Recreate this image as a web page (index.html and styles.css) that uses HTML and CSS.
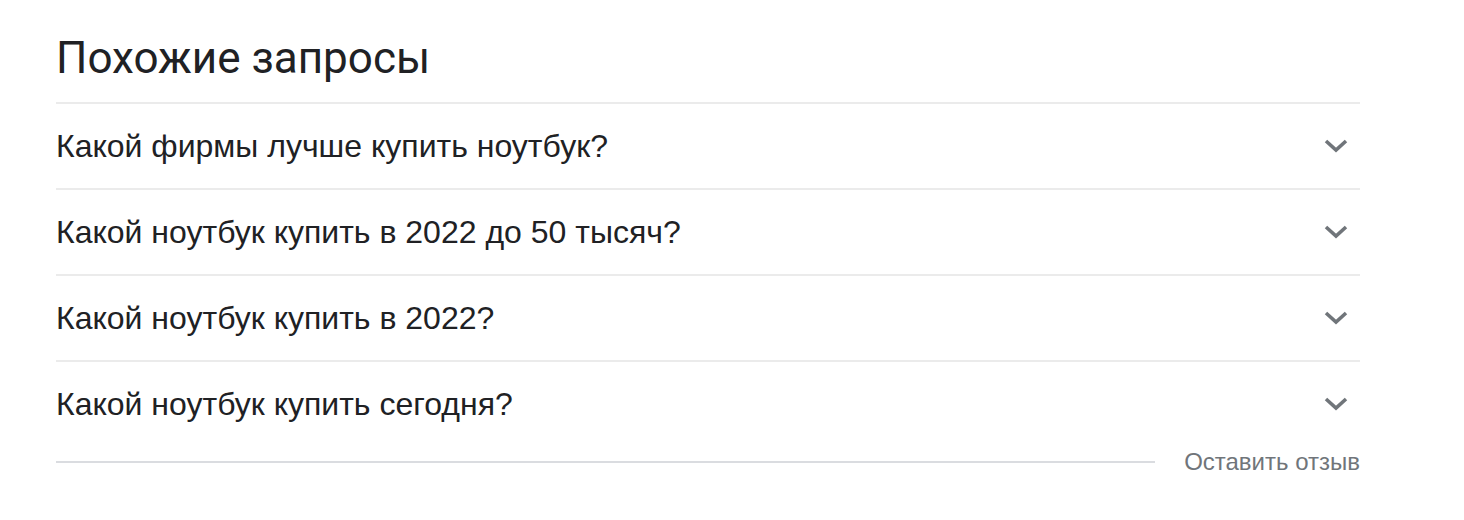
FILE: index.html
```html
<!DOCTYPE html>
<html lang="ru">
<head>
<meta charset="utf-8">
<link rel="stylesheet" href="styles.css">
</head>
<body>
<div class="block">
  <h2 class="title">Похожие запросы</h2>
  <div class="list">
    <div class="row"><span class="q">Какой фирмы лучше купить ноутбук?</span><svg class="chev" viewBox="0 0 24 14"><polyline points="2,2 12,11 22,2"/></svg></div>
    <div class="row"><span class="q">Какой ноутбук купить в 2022 до 50 тысяч?</span><svg class="chev" viewBox="0 0 24 14"><polyline points="2,2 12,11 22,2"/></svg></div>
    <div class="row"><span class="q">Какой ноутбук купить в 2022?</span><svg class="chev" viewBox="0 0 24 14"><polyline points="2,2 12,11 22,2"/></svg></div>
    <div class="row"><span class="q">Какой ноутбук купить сегодня?</span><svg class="chev" viewBox="0 0 24 14"><polyline points="2,2 12,11 22,2"/></svg></div>
  </div>
  <div class="footer"><div class="fline"></div><span class="feedback">Оставить отзыв</span></div>
</div>
</body>
</html>
```

FILE: styles.css
```css
html, body { margin: 0; padding: 0; background: #fff; }
body { font-family: "Liberation Sans", Arial, sans-serif; color: #202124; }
.block { width: 1304px; margin-left: 56px; padding-top: 32px; }
.title {
  font-family: "Roboto", "Open Sans", sans-serif;
  font-weight: 400;
  font-size: 44px;
  line-height: 52px;
  margin: 0 0 18px 0;
  color: #202124;
}
.list { border-top: 2px solid #ebebeb; }
.row {
  display: flex;
  align-items: center;
  justify-content: space-between;
  height: 84px;
  border-bottom: 2px solid #ebebeb;
}
.row:last-child { border-bottom: none; height: 84px; }
.q { font-size: 32px; line-height: 40px; color: #202124; }
.chev { width: 24px; height: 14px; margin-right: 12px; fill: none; stroke: #70757a; stroke-width: 3.6; }
.footer { display: flex; align-items: center; height: 32px; }
.fline { flex: 1; height: 2px; background: #dadce0; margin-right: 29px; }
.feedback { font-size: 24px; line-height: 32px; color: #70757a; }
```
